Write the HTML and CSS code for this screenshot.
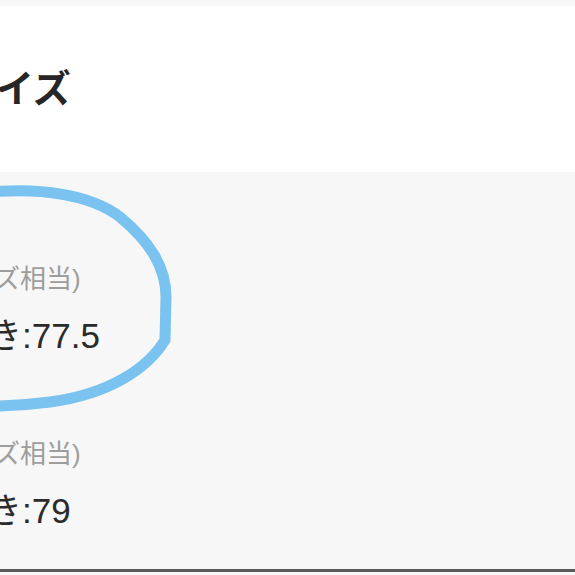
FILE: index.html
```html
<!DOCTYPE html>
<html lang="ja">
<head>
<meta charset="utf-8">
<link rel="stylesheet" href="styles.css">
</head>
<body>
  <div class="topstrip"></div>
  <header class="header">
    <h1 class="title">イズ</h1>
  </header>
  <section class="panel">
    <div class="item">
      <div class="label">ズ相当)</div>
      <div class="value">き:77.5</div>
    </div>
    <div class="item">
      <div class="label">ズ相当)</div>
      <div class="value">き:79</div>
    </div>
    <svg class="circle" width="200" height="260" viewBox="0 0 200 260">
      <path d="M -10 20 C 40 16, 90 22, 120 45 C 150 70, 166 95, 166 125 L 165 168 C 148 196, 110 222, 50 230 C 20 234, 0 234, -10 234" fill="none" stroke="#7ac2f0" stroke-width="11" stroke-linecap="round" stroke-linejoin="round"/>
    </svg>
  </section>
</body>
</html>
```
FILE: styles.css
```css
html, body {
  margin: 0;
  padding: 0;
}
body {
  background: #f7f7f7;
  overflow: hidden;
  width: 575px;
  height: 575px;
  font-family: "Liberation Sans", "Noto Sans CJK JP", sans-serif;
}
.topstrip {
  height: 6px;
  background: #f7f7f7;
}
.header {
  height: 166px;
  background: #ffffff;
  display: flex;
  align-items: center;
}
.title {
  margin: 0 0 0 -4px;
  font-size: 38px;
  line-height: 44px;
  font-weight: 700;
  color: #262626;
  white-space: nowrap;
}
.panel {
  position: relative;
  height: 400px;
  box-sizing: border-box;
  padding-top: 92px;
  background: #f7f7f7;
  border-bottom: 3px solid #5a5a5a;
  display: flex;
  flex-direction: column;
  gap: 83px;
}
.item {
  display: flex;
  flex-direction: column;
  gap: 22px;
}
.label {
  font-size: 26px;
  line-height: 30px;
  color: #9d9d9d;
  margin-left: -6px;
  white-space: nowrap;
}
.value {
  font-size: 35px;
  line-height: 40px;
  color: #2b2b2b;
  margin-left: -13px;
  white-space: nowrap;
}
.circle {
  position: absolute;
  left: 0;
  top: 0;
}
```
